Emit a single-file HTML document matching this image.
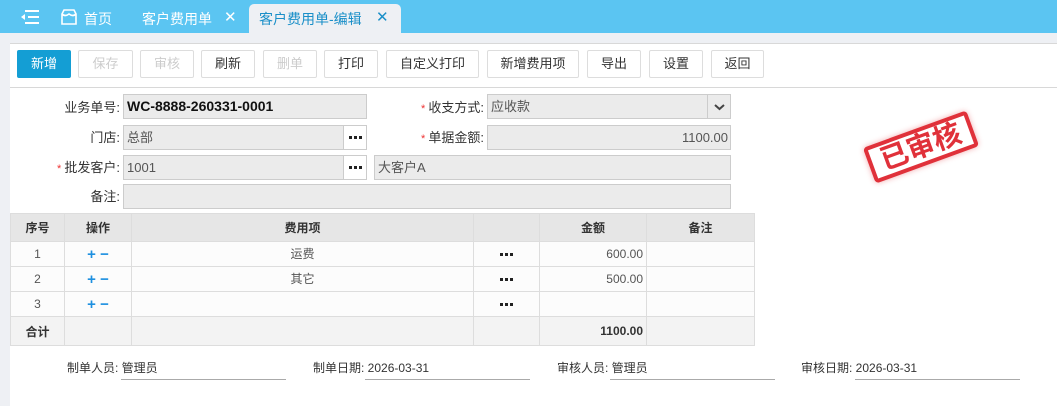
<!DOCTYPE html><html><head><meta charset="utf-8"><style>
*{box-sizing:border-box;margin:0;padding:0}
body{width:1057px;height:406px;overflow:hidden;background:#eef0f4;font-family:"Liberation Sans","Noto Sans CJK SC",sans-serif;font-size:13px;color:#333;position:relative}
.a{position:absolute}
.tabbar{left:0;top:0;width:1057px;height:33px;background:#5bc5f2}
.tab{color:#fff;font-size:14px;top:9px}
.main{left:10px;top:43px;width:1047px;height:363px;background:#fff;border-top:1px solid #d8d8d8}
.btn{top:50px;height:28px;border:1px solid #ddd;border-radius:2px;background:#fff;text-align:center;line-height:26px;font-size:13px;color:#333}
.dis{color:#ccc}
.lbl{text-align:right;font-size:13px;color:#333}
.inp{height:25px;border:1px solid #ccc;background:#ebebeb;line-height:23px;padding-left:3px;color:#555}
.dots{height:25px;border:1px solid #ccc;background:#fff;display:flex;align-items:center;justify-content:center;gap:2px}
.dots i,.d i{display:block;width:3px;height:3px;background:#222}
.d{display:flex;justify-content:center;gap:2px}
.star{color:#e33;font-size:11px}
table{position:absolute;left:10px;top:213px;border-collapse:collapse;font-size:12px;color:#555}
td{border:1px solid #ddd;text-align:center;height:25px;padding:0}
tr.h td{background:#e6e6e6;height:28px;font-weight:bold;color:#333;font-size:12px}
tr.r td{background:#fcfcfc}
tr.t td{background:#f3f3f3;height:29px;font-weight:bold;color:#333}
.pm{color:#1e90e0;font-weight:bold;font-size:15px}
.f{top:359px;font-size:12px;color:#333}
.fl{top:379px;height:1px;background:#aaa;width:165px}
</style></head><body>
<div class="a tabbar"></div>
<svg class="a" style="left:20px;top:9px" width="20" height="16"><g fill="#fff"><rect x="5" y="1" width="14" height="2"/><rect x="8" y="7" width="11" height="2"/><rect x="5" y="13" width="14" height="2"/><path d="M1 8 L5 5 L5 11Z"/></g></svg>
<svg class="a" style="left:60px;top:9px" width="18" height="16"><path d="M2 5 L4 1 H14 L16 5 V15 H2 Z M2 5 Q5 8 9 5 Q13 8 16 5" fill="none" stroke="#fff" stroke-width="1.6"/></svg>
<div class="a tab" style="left:84px">首页</div>
<div class="a tab" style="left:142px">客户费用单</div>
<div class="a tab" style="left:224px;font-size:15px;top:8px">✕</div>
<div class="a" style="left:249px;top:4px;width:152px;height:29px;background:#eef0f4;border-radius:5px 5px 0 0"></div>
<div class="a tab" style="left:259px;color:#1a8fc8">客户费用单-编辑</div>
<div class="a tab" style="left:376px;color:#1a8fc8;font-size:15px;top:8px">✕</div>
<div class="a main"></div>
<div class="a btn" style="left:17px;width:54px;background:#149ed4;border-color:#149ed4;color:#fff">新增</div>
<div class="a btn dis" style="left:78px;width:55px">保存</div>
<div class="a btn dis" style="left:140px;width:54px">审核</div>
<div class="a btn" style="left:201px;width:54px">刷新</div>
<div class="a btn dis" style="left:263px;width:54px">删单</div>
<div class="a btn" style="left:324px;width:54px">打印</div>
<div class="a btn" style="left:386px;width:93px">自定义打印</div>
<div class="a btn" style="left:487px;width:92px">新增费用项</div>
<div class="a btn" style="left:587px;width:54px">导出</div>
<div class="a btn" style="left:649px;width:54px">设置</div>
<div class="a btn" style="left:711px;width:53px">返回</div>
<div class="a" style="left:10px;top:87px;width:1047px;height:1px;background:#d8d8d8"></div>

<div class="a lbl" style="left:40px;top:97px;width:80px">业务单号:</div>
<div class="a inp" style="left:123px;top:94px;width:244px;color:#111;font-weight:bold;font-size:14px">WC-8888-260331-0001</div>
<div class="a lbl" style="left:40px;top:127px;width:80px">门店:</div>
<div class="a inp" style="left:123px;top:125px;width:221px">总部</div>
<div class="a dots" style="left:343px;top:125px;width:24px"><i></i><i></i><i></i></div>
<div class="a lbl" style="left:40px;top:157px;width:80px"><span class="star">* </span>批发客户:</div>
<div class="a inp" style="left:123px;top:155px;width:221px">1001</div>
<div class="a dots" style="left:343px;top:155px;width:24px"><i></i><i></i><i></i></div>
<div class="a inp" style="left:374px;top:155px;width:357px">大客户A</div>
<div class="a lbl" style="left:40px;top:186px;width:80px">备注:</div>
<div class="a inp" style="left:123px;top:184px;width:608px"></div>

<div class="a lbl" style="left:400px;top:97px;width:84px"><span class="star">* </span>收支方式:</div>
<div class="a inp" style="left:487px;top:94px;width:244px">应收款</div>
<div class="a" style="left:707px;top:95px;width:23px;height:23px;border-left:1px solid #ccc"><svg width="23" height="23"><path d="M7 10 L11.5 14 L16 10" fill="none" stroke="#444" stroke-width="2"/></svg></div>
<div class="a lbl" style="left:400px;top:127px;width:84px"><span class="star">* </span>单据金额:</div>
<div class="a inp" style="left:487px;top:125px;width:244px;text-align:right;padding-right:2px">1100.00</div>

<div class="a" style="left:866px;top:128px;width:110px;height:38px;border:4px solid #e0313a;border-radius:4px;transform:rotate(-20deg);color:#e0313a;font-size:28px;font-weight:bold;text-align:center;line-height:30px;box-shadow:0 0 6px rgba(224,49,58,.4)">已审核</div>

<table>
<tr class="h"><td style="width:54px">序号</td><td style="width:67px">操作</td><td style="width:342px">费用项</td><td style="width:66px"></td><td style="width:107px">金额</td><td style="width:108px">备注</td></tr>
<tr class="r"><td>1</td><td class="pm">+ −</td><td style="vertical-align:top;padding-top:3px">运费</td><td><div class="d"><i></i><i></i><i></i></div></td><td style="text-align:right;padding-right:3px">600.00</td><td></td></tr>
<tr class="r"><td>2</td><td class="pm">+ −</td><td style="vertical-align:top;padding-top:3px">其它</td><td><div class="d"><i></i><i></i><i></i></div></td><td style="text-align:right;padding-right:3px">500.00</td><td></td></tr>
<tr class="r"><td>3</td><td class="pm">+ −</td><td></td><td><div class="d"><i></i><i></i><i></i></div></td><td></td><td></td></tr>
<tr class="t"><td>合计</td><td></td><td></td><td></td><td style="text-align:right;padding-right:3px">1100.00</td><td></td></tr>
</table>

<div class="a f" style="left:67px">制单人员: 管理员</div><div class="a fl" style="left:121px"></div>
<div class="a f" style="left:313px">制单日期: 2026-03-31</div><div class="a fl" style="left:365px"></div>
<div class="a f" style="left:557px">审核人员: 管理员</div><div class="a fl" style="left:610px"></div>
<div class="a f" style="left:801px">审核日期: 2026-03-31</div><div class="a fl" style="left:855px"></div>
</body></html>
